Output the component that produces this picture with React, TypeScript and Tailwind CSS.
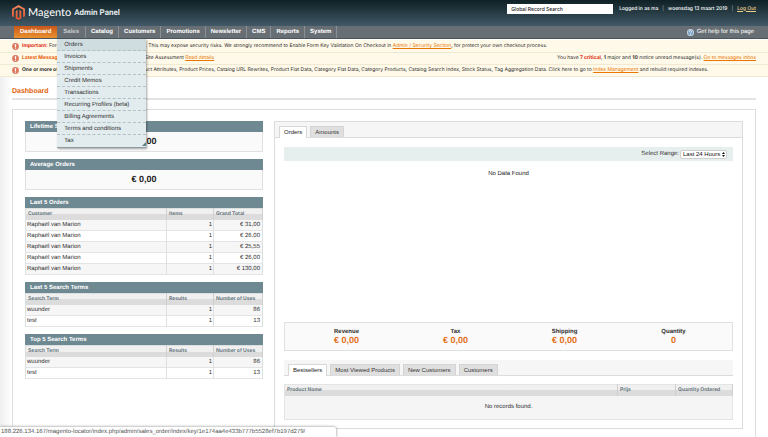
import type { ReactNode } from 'react';

const navItems = ['Catalog', 'Customers', 'Promotions', 'Newsletter', 'CMS', 'Reports', 'System'];

const salesMenu = [
  'Orders',
  'Invoices',
  'Shipments',
  'Credit Memos',
  'Transactions',
  'Recurring Profiles (beta)',
  'Billing Agreements',
  'Terms and conditions',
  'Tax',
];

function MagentoMark() {
  return (
    <svg viewBox="1.6 0 20.8 24" className="h-[15px] w-[13px]" aria-hidden="true">
      <defs>
        <linearGradient id="mark" x1="0" y1="0" x2="0" y2="1">
          <stop offset="0" stopColor="#f08a5c" />
          <stop offset="1" stopColor="#e2502a" />
        </linearGradient>
      </defs>
      <path
        fill="url(#mark)"
        d="M12 24l-4.455-2.572v-12l2.97-1.715v12.001l1.485.902 1.485-.902V7.713l2.971 1.715v12L12 24zM22.391 6v12l-2.969 1.714V7.713L12 3.43 4.574 7.713v12.001L1.609 18V6L12.001 0l10.39 6z"
      />
    </svg>
  );
}

function Alert() {
  return (
    <svg viewBox="0 0 14 14" className="h-[7px] w-[7px] shrink-0" aria-hidden="true">
      <circle cx="7" cy="7" r="6.8" fill="#dd7a62" />
      <path d="M5.6 2.4h2.800l-.5 5.400H6.100zM5.900 9h2.200v2.400H5.900z" fill="#fff" />
    </svg>
  );
}

function Header() {
  return (
    <header className="flex h-[26px] items-start justify-between bg-linear-to-b from-[#0f2125] to-[#425968] pr-3 pl-3">
      <div className="flex h-[25px] items-center gap-[3px] text-white">
        <MagentoMark />
        <span className="font-['Lato'] text-[11px] leading-[12px]">Magento</span>
        <span className="font-['Roboto'] text-[8px] leading-[12px] font-bold text-[#e3e8ea]">Admin Panel</span>
      </div>
      <div className="flex items-center gap-[6px] pt-1 font-['Inter'] text-[5px] leading-[9px] font-medium text-white">
        <input
          aria-label="Global Record Search"
          defaultValue="Global Record Search"
          className="h-[10px] w-[106px] bg-white px-1 text-[#222]"
        />
        <div className="flex gap-1">
          <span>Logged in as ma</span>
          <span className="text-[#8b9ba3]">|</span>
          <span>woensdag 13 maart 2019</span>
          <span className="text-[#8b9ba3]">|</span>
          <a href="#logout" className="text-[#f3cf8a] underline">
            Log Out
          </a>
        </div>
      </div>
    </header>
  );
}

function Nav() {
  return (
    <nav className="flex h-[13px] items-stretch justify-between border-b border-[#4a5459] bg-[#686f74] pr-[14px] pl-[14px] text-[6px] leading-[12px] text-white">
      <ul className="flex font-bold">
        <li className="bg-linear-to-b from-[#c9561a] to-[#ea922f] px-[6px]">
          <a href="#dashboard">Dashboard</a>
        </li>
        <li className="relative border-r border-[#8a9196] px-[6px]">
          <a href="#sales" className="text-[#c5cbce]">
            Sales
          </a>
          <ul className="absolute top-[13px] left-0 z-10 w-[89px] border-b border-[#8f9b9e] bg-[#e2ebed] font-normal text-[#2f2f2f] shadow-[1px_1px_2px_rgba(0,0,0,0.35)]">
            {salesMenu.map((label, i) => (
              <li
                key={label}
                className={
                  i === 0
                    ? 'h-3 border-b border-dashed border-[#b3c0c4] bg-[#cfdde1] px-[7px]'
                    : i === salesMenu.length - 1
                      ? 'h-3 px-[7px]'
                      : 'h-3 border-b border-dashed border-[#b3c0c4] px-[7px]'
                }
              >
                <a href={'#' + label}>{label}</a>
              </li>
            ))}
            <svg viewBox="0 0 4 4" className="absolute right-0 bottom-px size-1" aria-hidden="true">
              <path d="M4 0v4H0z" fill="#5f7d86" />
            </svg>
          </ul>
        </li>
        {navItems.map((label) => (
          <li key={label} className="border-r border-[#8a9196] px-[5px]">
            <a href={'#' + label}>{label}</a>
          </li>
        ))}
      </ul>
      <a href="#help" className="flex items-center gap-[3px]">
        <svg viewBox="0 0 14 14" className="size-[7px]" aria-hidden="true">
          <circle cx="7" cy="7" r="7" fill="#c8dbea" />
          <circle cx="7" cy="7" r="5.4" fill="#7fa3c4" />
          <path d="M4.8 5.4a2.2 2.2 0 1 1 3.2 2c-.7.4-1 .7-1 1.400M7 10v1.400" fill="none" stroke="#fff" strokeWidth="1.500" />
        </svg>
        Get help for this page
      </a>
    </nav>
  );
}

function Link({ children }: { children: ReactNode }) {
  return (
    <a href="#more" className="text-[#ea7601] underline">
      {children}
    </a>
  );
}

function Messages() {
  const row = 'flex h-3 items-center gap-[3px] border-b border-[#f2e9d3] pr-3 pl-3 whitespace-nowrap';
  return (
    <section
      aria-label="Messages"
      className="mt-px bg-[#fff9e9] pt-px font-['Inter'] text-[5px] leading-[11px] text-[#2f2f2f]"
    >
      <div className={row}>
        <Alert />
        <p>
          <strong className="text-[#df280a]">Important:</strong> Formkey validation on checkout disabled. This may expose
          security risks. We strongly recommend to Enable Form Key Validation On Checkout in{' '}
          <Link>Admin / Security Section</Link>, for protect your own checkout process.
        </p>
      </div>
      <div className={row}>
        <Alert />
        <p className="flex-1">
          <strong className="text-[#ea5b01]">Latest Message:</strong> Sign up for a Magento Commerce Site Assessment{' '}
          <Link>Read details</Link>
        </p>
        <p>
          You have <strong className="text-[#df280a]">7 critical</strong>, <strong>1</strong> major and <strong>10</strong>{' '}
          notice unread message(s). <Link>Go to messages inbox</Link>
        </p>
      </div>
      <div className={row}>
        <Alert />
        <p>
          <strong>One or more of the Indexes</strong> are not up to date: Product Attributes, Product Prices, Catalog URL
          Rewrites, Product Flat Data, Category Flat Data, Category Products, Catalog Search Index, Stock Status, Tag
          Aggregation Data. Click here to go to <Link>Index Management</Link> and rebuild required indexes.
        </p>
      </div>
    </section>
  );
}

function BlockTitle({ children }: { children: ReactNode }) {
  return <h2 className="h-[11px] bg-[#6f8992] px-[5px] text-[6px] leading-[12px] font-bold text-white">{children}</h2>;
}

function Figure({ title, value }: { title: string; value: string }) {
  return (
    <section>
      <BlockTitle>{title}</BlockTitle>
      <p className="h-5 border border-t-0 border-[#e0e0e0] bg-[#fafafa] text-center text-[9px] leading-[18px] font-bold text-[#222]">
        {value}
      </p>
    </section>
  );
}

const headRow =
  "h-[11px] bg-linear-to-b from-[#f0f0f0] from-50% to-[#dcdcdc] to-50% text-left font-['Inter'] text-[5px] text-[#67767e]";

function Listing({ title, heads, rows }: { title: string; heads: string[]; rows: string[][] }) {
  return (
    <section>
      <BlockTitle>{title}</BlockTitle>
      <table className="w-full table-fixed border-collapse border border-[#dadfe0] text-[6px] leading-[10px] text-[#2f2f2f]">
        <colgroup>
          <col />
          <col className="w-[47px]" />
          <col className="w-[49px]" />
        </colgroup>
        <thead>
          <tr className={headRow}>
            {heads.map((h) => (
              <th key={h} className="border-r border-[#d0d0d0] p-0 pl-[2px] font-bold whitespace-nowrap">
                {h}
              </th>
            ))}
          </tr>
        </thead>
        <tbody>
          {rows.map((cells, i) => (
            <tr key={i} className="h-[11px] border-b border-[#e2e4e5] odd:bg-[#f6f6f6] even:bg-white">
              <td className="border-r border-[#e0e0e0] p-0 pl-px">{cells[0]}</td>
              <td className="border-r border-[#e0e0e0] p-0 pr-px text-right">{cells[1]}</td>
              <td className="p-0 pr-[2px] text-right">{cells[2]}</td>
            </tr>
          ))}
        </tbody>
      </table>
    </section>
  );
}

const orders = ['31,00', '26,00', '25,55', '26,00', '130,00'].map((t) => ['Raphaël van Marion', '1', '€ ' + t]);
const terms = [
  ['wuunder', '1', '86'],
  ['test', '1', '13'],
];
const termHeads = ['Search Term', 'Results', 'Number of Uses'];

function Tabs({ labels }: { labels: string[] }) {
  return (
    <div role="tablist" className="flex h-4 items-end gap-[3px] border-b border-[#dcdcdc] bg-[#f6f6f6] pl-1">
      {labels.map((label, i) => (
        <button
          key={label}
          role="tab"
          aria-selected={i === 0}
          className={
            i === 0
              ? '-mb-px h-3 border border-b-0 border-[#d8d8d8] bg-white px-1 text-[6px] leading-[11px] text-[#222]'
              : 'h-[11px] border border-b-0 border-[#d4d4d4] bg-[#dfdfdf] px-1 text-[6px] leading-[10px] text-[#333]'
          }
        >
          {label}
        </button>
      ))}
    </div>
  );
}

const totals = [
  ['Revenue', '€ 0,00'],
  ['Tax', '€ 0,00'],
  ['Shipping', '€ 0,00'],
  ['Quantity', '0'],
];

function Diagrams() {
  return (
    <section className="min-w-0 flex-1 border border-[#dcdcdc] bg-white">
      <Tabs labels={['Orders', 'Amounts']} />
      <div className="px-[9px] pt-[9px] pb-2">
        <div className="flex h-[14px] items-center justify-end gap-px bg-[#e6eeee] pr-[6px] text-[6px] text-[#333]">
          <label htmlFor="range">Select Range:</label>
          <span className="relative flex">
            <select
              id="range"
              className="h-[9px] w-[47px] appearance-none rounded-[2px] border border-[#cfcfcf] bg-white pl-[2px] text-[6px] leading-[7px] text-[#111]"
            >
              <option>Last 24 Hours</option>
            </select>
            <svg viewBox="0 0 6 10" className="pointer-events-none absolute top-[2px] right-[2px] h-[5px] w-[3px]" aria-hidden="true">
              <path d="M3 0l3 4H0zM3 10l3-4H0z" fill="#111" />
            </svg>
          </span>
        </div>
        <p className="h-[161px] pt-2 text-center text-[6px] leading-[10px] text-[#222]">No Data Found</p>
        <dl className="grid h-[29px] grid-cols-4 border border-[#e0e0e0] bg-[#fafafa] pt-[5px] pr-1 pl-[7px] text-center">
          {totals.map(([label, value]) => (
            <div key={label}>
              <dt className="text-[6px] leading-[8px] font-bold text-[#2f2f2f]">{label}</dt>
              <dd className="text-[9px] leading-[9px] font-bold text-[#e3701a]">{value}</dd>
            </div>
          ))}
        </dl>
        <div className="mt-[9px]">
          <Tabs labels={['Bestsellers', 'Most Viewed Products', 'New Customers', 'Customers']} />
        </div>
        <table className="mt-2 w-full table-fixed border-collapse border border-[#e4e4e4] bg-[#f5f5f5] text-[6px] leading-[10px] text-[#2f2f2f]">
          <colgroup>
            <col />
            <col className="w-[58px]" />
            <col className="w-[57px]" />
          </colgroup>
          <thead>
            <tr className={headRow}>
              {['Product Name', 'Prijs', 'Quantity Ordered'].map((h) => (
                <th key={h} className="border-r border-[#cfcfcf] p-0 pl-[2px] font-bold whitespace-nowrap">
                  {h}
                </th>
              ))}
            </tr>
          </thead>
          <tbody>
            <tr className="h-6">
              <td colSpan={3} className="p-0 text-center">
                No records found.
              </td>
            </tr>
          </tbody>
        </table>
      </div>
    </section>
  );
}

export default function App() {
  return (
    <div className="relative flex h-screen flex-col overflow-hidden bg-white font-['Liberation_Sans',Arial,sans-serif] [text-rendering:geometricPrecision]">
      <Header />
      <Nav />
      <Messages />
      <main className="flex flex-1 flex-col bg-linear-to-r from-[#efefef] to-white to-[12px] px-3 pt-[10px]">
        <h1 className="border-b-2 border-[#e3e3e3] pb-px text-[7px] leading-[10px] font-bold text-[#e35f0b]">Dashboard</h1>
        <div className="mt-[9px] flex flex-1 items-start gap-[11px] border border-b-0 border-[#dedede] bg-white p-3 pt-[11px] pb-0">
          <div className="flex w-[238px] shrink-0 flex-col gap-[7px]">
            <Figure title="Lifetime Sales" value="€ 0,00" />
            <Figure title="Average Orders" value="€ 0,00" />
            <Listing title="Last 5 Orders" heads={['Customer', 'Items', 'Grand Total']} rows={orders} />
            <Listing title="Last 5 Search Terms" heads={termHeads} rows={terms} />
            <Listing title="Top 5 Search Terms" heads={termHeads} rows={terms} />
          </div>
          <Diagrams />
        </div>
      </main>
      <div
        role="status"
        className="absolute bottom-0 left-0 h-[10px] w-[336px] overflow-hidden rounded-tr-[2px] bg-white px-px text-[6px] leading-[11px] whitespace-nowrap text-[#555] shadow-[0_0_3px_rgba(0,0,0,0.5)]"
      >
        188.226.134.167/magento-locator/index.php/admin/sales_order/index/key/1e174aa4e433b777b5528ef7b197d279/
      </div>
    </div>
  );
}
